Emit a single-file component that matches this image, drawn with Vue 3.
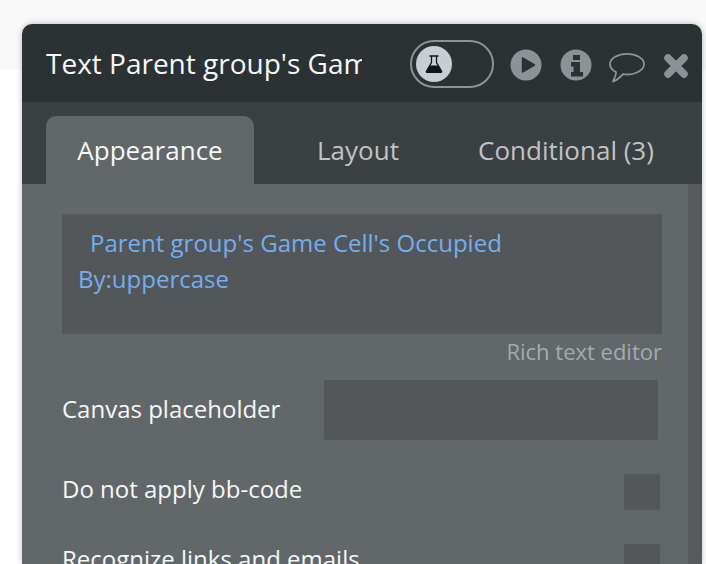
<script setup>
const tabs = [
  { label: 'Appearance', active: true },
  { label: 'Layout', active: false },
  { label: 'Conditional (3)', active: false }
]
</script>

<template>
  <div class="page">
    <div class="strip"></div>
    <section class="panel">
      <header class="head">
        <div class="title">Text Parent group's Game Cell's Occupied By:uppercase</div>
        <div class="toggle">
          <span class="knob">
            <svg width="18" height="18" viewBox="0 0 18 18">
              <path d="M4.500 1h9M6.500 1v6.500L1.500 16a1 1 0 0 0 1 1.500h13a1 1 0 0 0 1-1.500L11.500 7.500V1" fill="none" stroke="#121517" stroke-width="1.300" />
              <path d="M4.800 10.500h8.400l3.300 6.500H1.500z" fill="#121517" />
            </svg>
          </span>
        </div>
        <svg class="icon play" width="32" height="32" viewBox="0 0 32 32">
          <circle cx="16" cy="16" r="15.500" fill="#8a9496" />
          <path d="M12.500 9 24.500 16 12.500 23z" fill="#2c3134" stroke="#2c3134" stroke-width="1.500" stroke-linejoin="round" />
        </svg>
        <svg class="icon info" width="32" height="32" viewBox="0 0 32 32">
          <circle cx="16" cy="16" r="15.500" fill="#8a9496" />
          <path d="M13 6h7v5h-7zM11 13h9v10h3v4.500H11V23h2.500v-5.500H11z" fill="#2c3134" />
        </svg>
        <svg class="icon chat" width="36" height="32" viewBox="0 0 36 32">
          <path d="M14 21.200c1.300.2 2.600.3 4 .3 9 0 17-4.500 17-10.500S27 .9 18 .9 1 5 1 11c0 3.500 2.400 6.300 6 8 0 3.500-1.500 6.500-3 9.500 3.500-.8 7-4 10-7.300z" fill="none" stroke="#8a9496" stroke-width="1.800" stroke-linejoin="round" />
        </svg>
        <svg class="icon close" width="26" height="26" viewBox="0 0 26 26">
          <path d="M5 5 21 21M21 5 5 21" fill="none" stroke="#8a9496" stroke-width="7.500" stroke-linecap="round" />
        </svg>
      </header>

      <nav class="tabs">
        <div v-for="t in tabs" :key="t.label" class="tab" :class="{ active: t.active }">{{ t.label }}</div>
      </nav>

      <div class="body">
        <div class="content">
          <div class="expr"><span class="indent"></span>Parent group's Game Cell's Occupied By:uppercase</div>
          <div class="rich">Rich text editor</div>
          <div class="row placeholder">
            <span>Canvas placeholder</span>
            <div class="input"></div>
          </div>
          <div class="row check">
            <span class="lift">Do not apply bb-code</span>
            <div class="box"></div>
          </div>
          <div class="row check">
            <span class="lift">Recognize links and emails</span>
            <div class="box"></div>
          </div>
        </div>
        <div class="scroll"></div>
      </div>
    </section>
  </div>
</template>

<style>
body {
  background: #fff;
}
</style>

<style scoped>
.page {
  position: relative;
  width: 706px;
  height: 564px;
  overflow: hidden;
  padding: 24px 0 0 22px;
  box-sizing: border-box;
  font-family: "Open Sans", sans-serif;
}
.strip {
  position: absolute;
  left: 0;
  top: 0;
  right: 0;
  height: 70px;
  background: #f9f9f9;
}
.panel {
  position: relative;
  width: 680px;
  height: 540px;
  border-radius: 10px 10px 0 0;
  overflow: hidden;
  display: flex;
  flex-direction: column;
  box-shadow: 0 0 6px rgba(0, 0, 0, 0.25);
}
.head {
  height: 78px;
  flex: none;
  background: #2c3134;
  display: flex;
  align-items: center;
  padding-left: 24px;
}
.title {
  width: 316px;
  flex: none;
  overflow: hidden;
  white-space: nowrap;
  color: #f6f7f7;
  font-size: 28px;
}
.toggle {
  margin-left: 48px;
  margin-top: 2px;
  width: 84px;
  height: 48px;
  flex: none;
  box-sizing: border-box;
  border: 2px solid #8a9496;
  border-radius: 24px;
  display: flex;
  align-items: center;
  padding-left: 4px;
}
.knob {
  width: 36px;
  height: 36px;
  border-radius: 50%;
  background: #c8ced4;
  display: flex;
  align-items: center;
  justify-content: center;
}
.icon {
  flex: none;
  display: block;
}
.play {
  margin-left: 16px;
  margin-top: 4px;
}
.info {
  margin-left: 18px;
  margin-top: 4px;
}
.chat {
  margin-left: 17px;
  margin-top: 12px;
}
.close {
  margin-left: 18px;
  margin-top: 6px;
}
.tabs {
  height: 82px;
  flex: none;
  background: #3b4043;
  display: flex;
  align-items: flex-end;
  padding-left: 24px;
}
.tab {
  width: 208px;
  height: 68px;
  box-sizing: border-box;
  text-align: center;
  color: #c0c3c5;
  font-size: 26px;
  line-height: 68px;
  border-radius: 10px 10px 0 0;
  white-space: nowrap;
}
.tab.active {
  background: #62676a;
  color: #f6f7f7;
}
.body {
  flex: 1;
  min-height: 0;
  background: #62676a;
  display: flex;
}
.content {
  flex: 1;
  min-width: 0;
  padding: 30px 26px 0 40px;
  color: #f6f7f7;
  font-size: 24px;
}
.expr {
  height: 120px;
  box-sizing: border-box;
  background: #53575a;
  border-radius: 2px;
  padding: 11px 16px;
  color: #74aeef;
  line-height: 36px;
}
.indent {
  display: inline-block;
  width: 12px;
}
.rich {
  text-align: right;
  font-size: 22px;
  color: #a6aaac;
  line-height: 30px;
  margin-top: 2px;
}
.row {
  display: flex;
  align-items: center;
  justify-content: space-between;
  white-space: nowrap;
}
.placeholder {
  margin-top: 14px;
  height: 60px;
  padding-right: 4px;
}
.placeholder span {
  margin-bottom: 4px;
}
.input {
  width: 334px;
  height: 60px;
  background: #53575a;
  border-radius: 2px;
}
.check {
  height: 36px;
  margin-top: 34px;
  padding-right: 2px;
}
.lift {
  margin-bottom: 8px;
}
.box {
  width: 36px;
  height: 36px;
  background: #53575a;
  border-radius: 2px;
}
.scroll {
  width: 14px;
  flex: none;
  background: #565a5d;
}
</style>
